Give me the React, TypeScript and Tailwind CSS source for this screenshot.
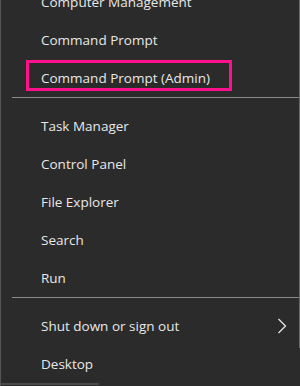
import React from "react";

function Item({ label, chevron, boxed }: { label: string; chevron?: boolean; boxed?: boolean }) {
  return (
    <div className="relative flex h-[38px] items-center pl-[40px] pr-[12px]">
      {boxed && (
        <div className="pointer-events-none absolute left-[25px] top-[1px] h-[31px] w-[206px] border-[3px] border-[#ff108c]" />
      )}
      <span className="flex-1 whitespace-nowrap">{label}</span>
      {chevron && (
        <svg width="10" height="16" viewBox="0 0 10 16" className="mr-[1px]">
          <path d="M1.5 1 L8.5 8 L1.5 15" fill="none" stroke="#e6e6e6" strokeWidth="1.3" />
        </svg>
      )}
    </div>
  );
}

function Sep() {
  return (
    <div className="h-[10px] pl-[11px] pr-[1px]">
      <div className="h-px bg-[#8a8a8a]" />
    </div>
  );
}

export default function App() {
  return (
    <div
      className="relative h-[386px] w-[300px] overflow-hidden border-l border-[#555555] bg-[#2b2b2b] text-[13.5px] text-[#e8e8e8]"
      style={{ fontFamily: '"Segoe UI", "Open Sans", "Noto Sans", sans-serif' }}
    >
      <div className="-mt-[17px]">
        <Item label="Computer Management" />
        <Item label="Command Prompt" />
        <Item label="Command Prompt (Admin)" boxed />
        <Sep />
        <Item label="Task Manager" />
        <Item label="Control Panel" />
        <Item label="File Explorer" />
        <Item label="Search" />
        <Item label="Run" />
        <Sep />
        <Item label="Shut down or sign out" chevron />
        <Item label="Desktop" />
      </div>
      <div className="absolute right-0 top-0 h-[348px] w-px bg-[#6a6a6a]" />
      <div className="absolute bottom-[1px] left-0 h-[2px] w-[98px] bg-[#4a4a4a]" />
    </div>
  );
}
